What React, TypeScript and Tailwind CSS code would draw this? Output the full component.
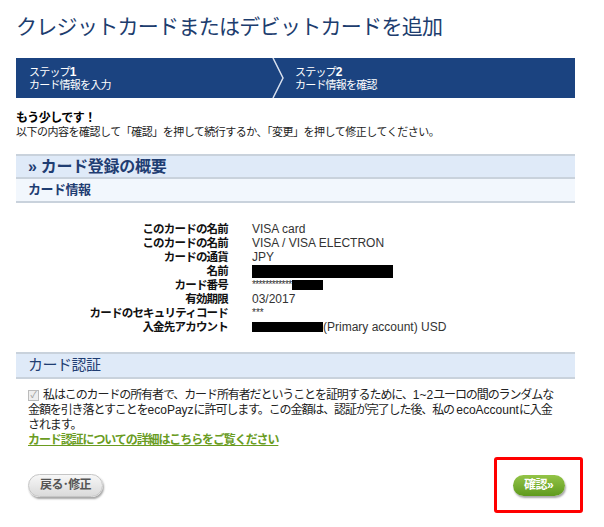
import React from 'react'

const jp = { fontFamily: '"Liberation Sans", "Noto Sans CJK JP", sans-serif' }

const rows: { label: string; value: React.ReactNode }[] = [
  { label: 'このカードの名前', value: 'VISA card' },
  { label: 'このカードの名前', value: 'VISA / VISA ELECTRON' },
  { label: 'カードの通貨', value: 'JPY' },
  { label: '名前', value: <span className="inline-block w-[141px] h-[13px] bg-black" /> },
  {
    label: 'カード番号',
    value: (
      <span className="flex items-center">
        <span className="text-[10px] tracking-[-0.6px]">************</span>
        <span className="inline-block w-[31px] h-[10px] bg-black" />
      </span>
    ),
  },
  { label: '有効期限', value: '03/2017' },
  { label: 'カードのセキュリティコード', value: <span className="text-[10px]">***</span> },
  {
    label: '入金先アカウント',
    value: (
      <span className="flex items-center">
        <span className="inline-block w-[71px] h-[10px] bg-black" />
        <span>(Primary account) USD</span>
      </span>
    ),
  },
]

// latin words keep normal spacing inside the tightened japanese text
const L = ({ children }: { children: React.ReactNode }) => (
  <span className="tracking-normal">{children}</span>
)

export default function App() {
  return (
    <div className="w-[604px] h-[527px] overflow-hidden bg-white px-4 text-[#222]" style={jp}>
      <h1 className="pt-[13px] text-[21px] leading-[28px] text-[#1d3d6e] tracking-[-0.7px]">
        クレジットカードまたはデビットカードを追加
      </h1>

      {/* steps */}
      <div className="mt-[17px] w-[559px] h-10 bg-[#1b4380] flex text-white text-[11px] leading-[13px] tracking-[-0.8px]">
        <div className="w-[256px] pl-[13px] pt-[8px]">
          <div>ステップ<b className="text-[12px]">1</b></div>
          <div>カード情報を入力</div>
        </div>
        <svg width="14" height="40" viewBox="0 0 14 40" className="shrink-0">
          <path d="M1 0 L11 20 L1 40" fill="none" stroke="#d9e1ee" strokeWidth="1.5" />
        </svg>
        <div className="pl-[9px] pt-[8px]">
          <div>ステップ<b className="text-[12px]">2</b></div>
          <div>カード情報を確認</div>
        </div>
      </div>

      <div className="mt-[13px] text-[11px] leading-[14px] tracking-[-0.5px]">
        <div className="font-bold text-black text-[12px]">もう少しです！</div>
        <div>以下の内容を確認して「確認」を押して続行するか、「変更」を押して修正してください。</div>
      </div>

      <div className="mt-[15px] w-[559px]">
        <div className="h-[25px] bg-[#dfeaf8] border-t-2 border-b-2 border-[#c9d2dc] flex items-center pl-[12px] text-[16px] font-bold text-[#1f3d72] tracking-[-0.3px]">
          » カード登録の概要
        </div>
        <div className="h-[24px] bg-[#f2f7fd] border-b-2 border-[#c9d2dc] flex items-center pl-[12px] text-[13px] font-bold text-[#1f3d72] tracking-[-0.5px]">
          カード情報
        </div>
      </div>

      <div className="mt-[19px] grid grid-cols-[212px_1fr] gap-x-6 text-[12px] leading-[14px]">
        {rows.map((r, i) => (
          <React.Fragment key={i}>
            <div className="text-right font-bold text-[#111] whitespace-nowrap text-[11.5px] tracking-[-0.8px]">{r.label}</div>
            <div className="text-[#333] flex items-center h-[14px]">{r.value}</div>
          </React.Fragment>
        ))}
      </div>

      <div className="mt-[18px] w-[559px] h-[27px] bg-[#dfeaf8] border-t-2 border-b-2 border-[#c9d2dc] flex items-center pl-[12px] text-[15px] text-[#1f3d72] tracking-[-0.5px]">
        カード認証
      </div>

      <div className="mt-[9px] pl-[12px] text-[12px] leading-[15px] text-[#222] tracking-[-1.1px]">
        <div className="whitespace-nowrap flex items-center">
          <span className="inline-flex w-[11px] h-[11px] mr-[4px] border border-[#bbb] bg-[#eee] items-center justify-center text-[9px] text-[#999] leading-none tracking-normal">✓</span>
          私はこのカードの所有者で、カード所有者だということを証明するために、<L>1~2</L>ユーロの間のランダムな
        </div>
        <div className="whitespace-nowrap">
          金額を引き落とすことを<L>ecoPayz</L>に許可します。この金額は、認証が完了した後、私の <L>ecoAccount</L>に入金
        </div>
        <div>されます。</div>
        <a href="#" className="font-bold text-[#6a9c1f] underline">カード認証についての詳細はこちらをご覧ください</a>
      </div>

      <div className="mt-[9px] flex items-center justify-between pl-[12px] pr-[5px]">
        <button className="h-[23px] px-[11px] rounded-full border border-[#c5c5c5] bg-gradient-to-b from-[#f7f7f7] to-[#dadada] shadow-[1px_2px_2px_rgba(0,0,0,0.35)] text-[12px] font-bold text-[#555] tracking-[-0.6px]">
          戻る･修正
        </button>
        <div className="w-[89px] h-[56px] border-[3px] border-[#f00] rounded-[3px] flex items-center justify-center">
          <button className="h-[21px] w-[52px] rounded-full bg-gradient-to-b from-[#93c447] to-[#5f9a1c] shadow-[1px_2px_2px_rgba(0,0,0,0.35)] text-[12px] font-bold text-white tracking-[-0.5px]">
            確認»
          </button>
        </div>
      </div>
    </div>
  )
}
